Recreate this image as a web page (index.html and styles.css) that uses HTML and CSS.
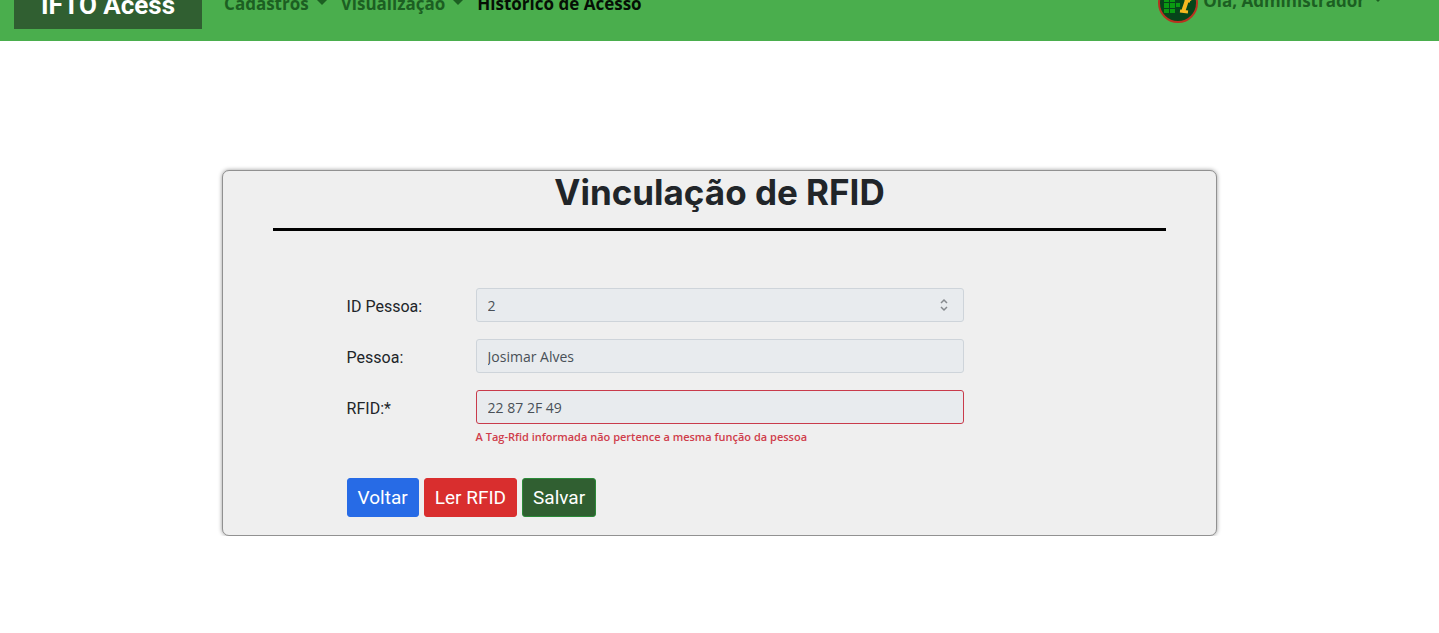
FILE: index.html
```html
<!DOCTYPE html>
<html lang="pt-BR">
<head>
<meta charset="utf-8">
<title>Vinculação de RFID</title>
<link rel="stylesheet" href="styles.css">
</head>
<body>
<header class="topbar">
  <a class="brand" href="#">IFTO Acess</a>
  <nav class="menu">
    <a class="menu-link caret" href="#">Cadastros</a>
    <a class="menu-link caret" href="#">Visualização</a>
    <a class="menu-link active" href="#">Histórico de Acesso</a>
  </nav>
  <a class="user" href="#">
    <svg class="avatar" viewBox="0 0 40 40" aria-hidden="true">
      <circle cx="20" cy="20" r="19" fill="#06451a" stroke="#b8321f" stroke-width="2"/>
      <path fill="#0a9a12" d="M6 8h5v5H6zM12 8h5v5h-5zM18 8h4v5h-4zM6 14h5v5H6zM12 14h5v5h-5zM6 20h5v5H6zM12 20h5v5h-5zM18 20h4v4h-4zM6 26h5v4H6zM12 26h5v4h-5z"/>
      <g fill="none" stroke="#f6b820">
        <circle cx="30" cy="13" r="4" stroke-width="3"/>
        <path d="M29 17l-4 12" stroke-width="4"/>
        <path d="M28 18h4M22 28l8 1" stroke-width="3"/>
      </g>
    </svg>
    <span class="user-name caret">Olá, Administrador</span>
  </a>
</header>
<main class="card">
  <h1 class="title">Vinculação de RFID</h1>
  <form class="form">
    <div class="row">
      <label class="label" for="id">ID Pessoa:</label>
      <div class="field">
        <input class="input" id="id" type="number" value="2" readonly>
        <svg class="stepper" viewBox="0 0 10 14" aria-hidden="true"><path d="M2 5l3-3 3 3M2 9l3 3 3-3"/></svg>
      </div>
    </div>
    <div class="row">
      <label class="label" for="pessoa">Pessoa:</label>
      <div class="field"><input class="input" id="pessoa" type="text" value="Josimar Alves" readonly></div>
    </div>
    <div class="row">
      <label class="label" for="rfid">RFID:*</label>
      <div class="field">
        <input class="input invalid" id="rfid" type="text" value="22 87 2F 49" aria-describedby="erro" readonly>
        <p class="error" id="erro">A Tag-Rfid informada não pertence a mesma função da pessoa</p>
      </div>
    </div>
    <div class="actions">
      <button class="btn blue" type="button">Voltar</button>
      <button class="btn red" type="button">Ler RFID</button>
      <button class="btn green" type="submit">Salvar</button>
    </div>
  </form>
</main>
</body>
</html>
```
FILE: styles.css
```css
* { box-sizing: border-box; }
body { margin: 0; background: #fff; color: #212529; font-family: "Open Sans", sans-serif; }

.topbar {
  display: flex;
  align-items: flex-end;
  height: 41px;
  padding: 0 56px 12px 14px;
  overflow: hidden;
  background: #4aae4d;
}
.brand {
  padding: 14px 27px 8px;
  background: #305f31;
  color: #fff;
  font: bold 26px/32px Roboto, sans-serif;
  text-decoration: none;
  white-space: nowrap;
}
.menu { display: flex; gap: 14px; margin-left: 22px; padding-bottom: 12px; }
.menu-link, .user { color: #1c5f22; font-size: 17px; line-height: 26px; font-weight: 700; text-decoration: none; white-space: nowrap; }
.menu-link.active { color: #050f05; }
.caret::after {
  content: "";
  display: inline-block;
  margin-left: 8px;
  vertical-align: 5px;
  border: 5px solid transparent;
  border-top-color: currentColor;
  border-bottom: 0;
}
.user { display: flex; align-items: center; gap: 5px; margin: 0 0 6px auto; }
.user-name { padding-bottom: 4px; }
.avatar { width: 40px; height: 40px; }

.card {
  width: 69.2%;
  margin: 129px auto 0;
  padding: 0 50px 18px;
  border: 1px solid #919191;
  border-radius: 7px;
  background: #efefef;
  box-shadow: 0 0 4px #999;
}
.title {
  margin: 0;
  padding-bottom: 14px;
  border-bottom: 3px solid #000;
  font: 700 35px/43px Inter, sans-serif;
  text-align: center;
}
.form { display: grid; gap: 17px; padding: 57px 74px 0; }
.row { display: grid; grid-template-columns: 129px minmax(0, 488px); }
.label { padding-top: 7px; font: 16px/24px Roboto, sans-serif; }
.field { position: relative; }
.input {
  display: block;
  width: 100%;
  height: 34px;
  padding: 0 11px;
  border: 1px solid #ced4da;
  border-radius: 3px;
  background: #e8ebee;
  color: #495057;
  font: 14px/20px "Open Sans", sans-serif;
  appearance: textfield;
}
.input::-webkit-inner-spin-button { appearance: none; margin: 0; }
.input.invalid { border-color: #c93b4b; }
.stepper { position: absolute; top: 10px; right: 15px; width: 10px; height: 14px; fill: none; stroke: #85898d; stroke-width: 1.5; }
.error { margin: 5px 0 0; color: #cf3d4b; font-size: 11px; line-height: 16px; font-weight: 600; }
.actions { display: flex; gap: 5px; padding-top: 16px; }
.btn { height: 39px; padding: 0 10px; border: 1px solid; border-radius: 3px; color: #fff; font: 19px/24px Roboto, sans-serif; }
.blue { background: #276be6; border-color: #276be6; }
.red { background: #d92e2e; border-color: #d92e2e; }
.green { background: #305f31; border-color: #2b8a38; }
```
